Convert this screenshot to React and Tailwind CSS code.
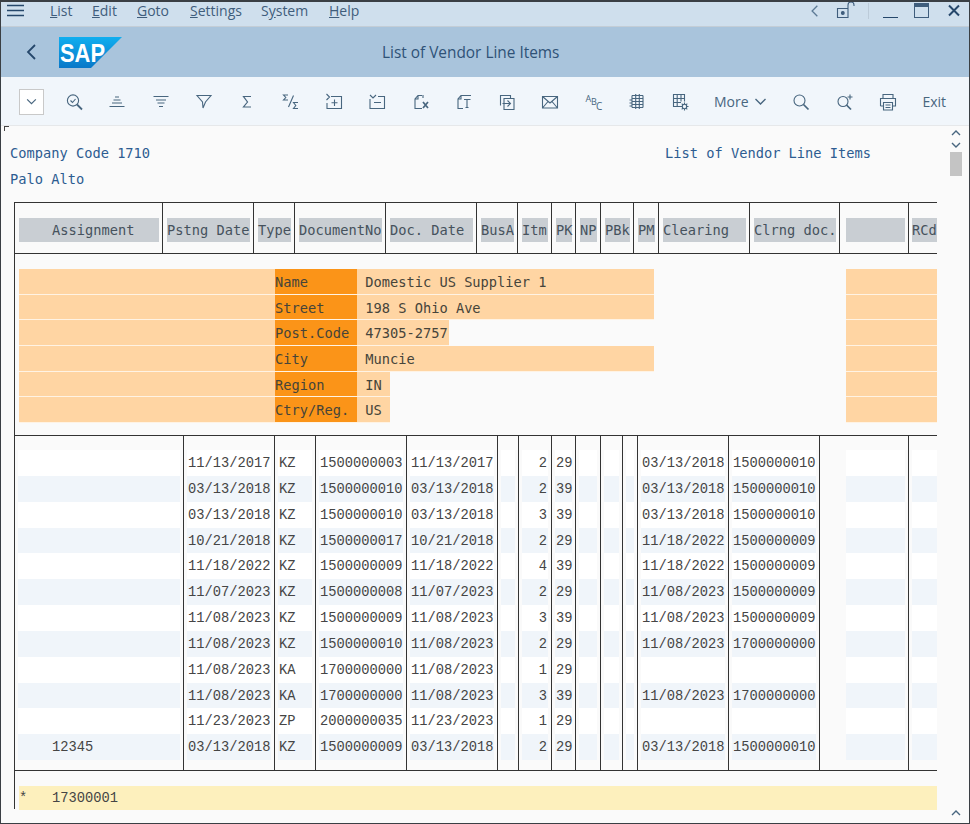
const mono = "font-['Liberation_Mono',monospace] text-[13.75px]";
const label = "font-['DejaVu_Sans_Mono',monospace] text-[13.7px]";
const ui = "font-['Open_Sans',sans-serif]";

const headerGrid = 'grid grid-cols-[148px_91px_41px_91px_91px_41px_34px_24px_25px_33px_25px_91px_90px_69px_29px]';
const dataGrid = 'grid grid-cols-[169px_91px_41px_91px_91px_21px_33px_24px_25px_22px_15px_91px_91px_89px_29px]';

const headers = [
  '    Assignment', 'Pstng Date', 'Type', 'DocumentNo', 'Doc. Date', 'BusA', 'Itm', 'PK', 'NP', 'PBk', 'PM',
  'Clearing', 'Clrng doc.', '', 'RCd',
];

const address = [
  { name: 'Name', value: ' Domestic US Supplier 1', width: 'w-[297px]' },
  { name: 'Street', value: ' 198 S Ohio Ave', width: 'w-[297px]' },
  { name: 'Post.Code', value: ' 47305-2757', width: 'w-[92px]' },
  { name: 'City', value: ' Muncie', width: 'w-[297px]' },
  { name: 'Region', value: ' IN', width: 'w-[33px]' },
  { name: 'Ctry/Reg.', value: ' US', width: 'w-[33px]' },
];

const rows = [
  ['', '11/13/2017', 'KZ', '1500000003', '11/13/2017', '2', '29', '03/13/2018', '1500000010'],
  ['', '03/13/2018', 'KZ', '1500000010', '03/13/2018', '2', '39', '03/13/2018', '1500000010'],
  ['', '03/13/2018', 'KZ', '1500000010', '03/13/2018', '3', '39', '03/13/2018', '1500000010'],
  ['', '10/21/2018', 'KZ', '1500000017', '10/21/2018', '2', '29', '11/18/2022', '1500000009'],
  ['', '11/18/2022', 'KZ', '1500000009', '11/18/2022', '4', '39', '11/18/2022', '1500000009'],
  ['', '11/07/2023', 'KZ', '1500000008', '11/07/2023', '2', '29', '11/08/2023', '1500000009'],
  ['', '11/08/2023', 'KZ', '1500000009', '11/08/2023', '3', '39', '11/08/2023', '1500000009'],
  ['', '11/08/2023', 'KZ', '1500000010', '11/08/2023', '2', '29', '11/08/2023', '1700000000'],
  ['', '11/08/2023', 'KA', '1700000000', '11/08/2023', '1', '29', '', ''],
  ['', '11/08/2023', 'KA', '1700000000', '11/08/2023', '3', '39', '11/08/2023', '1700000000'],
  ['', '11/23/2023', 'ZP', '2000000035', '11/23/2023', '1', '29', '', ''],
  ['    12345', '03/13/2018', 'KZ', '1500000009', '03/13/2018', '2', '29', '03/13/2018', '1500000010'],
];

function Icon({ children, w = 20, h = 20 }) {
  return (
    <svg width={w} height={h} viewBox={`0 0 ${w} ${h}`} fill="none" stroke="#48667f" strokeWidth="1.1" className="block">
      {children}
    </svg>
  );
}

const toolIcons = [
  // find with check
  <Icon key="find">
    <circle cx="9" cy="8.5" r="5.6" /><path d="M13 12.5l5 5" strokeWidth="1.8" /><path d="M6.5 8.5l2 2 3-3.5" />
  </Icon>,
  // sort ascending
  <Icon key="asc">
    <path d="M8 5h4M6.5 8h7M5 11h10M2.500 14.500h15" />
  </Icon>,
  // sort descending
  <Icon key="desc">
    <path d="M2.500 4.500h15M5 8h10M6.500 11h7M8 14.500h4" />
  </Icon>,
  // filter
  <Icon key="filter">
    <path d="M3 3.500h14l-5.500 6.500-2.500 6-.5-6z" />
  </Icon>,
  // sum
  <Icon key="sum">
    <path d="M14 4.500H6.500l4 5.500-4 5h7.500" strokeWidth="1.2" />
  </Icon>,
  // subtotal
  <Icon key="subtotal">
    <path d="M7 3H2.500l2.300 2.500-2.300 2.500H7M12.500 3.500L7.500 15M17 10.500h-4.500l2.300 3-2.300 3H17" />
  </Icon>,
  // expand
  <Icon key="expand">
    <path d="M2.500 2l3 3-3 3M7 4.500h10.500v12H3V11M10.500 7.500v6.500M7.500 10.700h6" />
  </Icon>,
  // collapse
  <Icon key="collapse">
    <path d="M3 3l3 3 3-3M11 4.500h6.500v12H3V7M7 10.500h7" />
  </Icon>,
  // doc x
  <Icon key="docx">
    <path d="M11 3.500H7L4 7v9.500h7M7 3.500V7H4M12 3v3" />
    <path d="M12 10l5 6M17 10l-5 6" strokeWidth="1.7" />
  </Icon>,
  // doc T
  <Icon key="doct">
    <path d="M17 3.500H7L4 7v9.500h5M7 3.500V7H4" />
    <path d="M10 7.500h6.500M13 7.500v8M11.500 15.500h3" />
  </Icon>,
  // doc export
  <Icon key="export">
    <path d="M3.500 13.500V3.500h10V6M7 6.500h10v11H7z" />
    <path d="M5.500 11.500h7.500M10.500 8.500l3 3-3 3" />
  </Icon>,
  // mail
  <Icon key="mail">
    <path d="M2.500 4.500h15v11.500h-15zM2.500 4.500L10 11l7.500-6.500M2.500 16L8 9.500M17.500 16L12 9.500" />
  </Icon>,
  // spelling
  <svg key="abc" width="20" height="20" viewBox="0 0 20 20" className="block overflow-visible">
    <text x="1.500" y="10" fontSize="9" fill="#48667f" fontFamily="Open Sans">A</text>
    <text x="7" y="13" fontSize="9" fill="#48667f" fontFamily="Open Sans">B</text>
    <text x="12" y="18" fontSize="10" fill="#48667f" fontFamily="Open Sans">C</text>
  </svg>,
  // table
  <Icon key="table">
    <path d="M5 3.500h11M5 6.500h11M5 9.500h11M5 12.500h11M5 15.500h11M5 3.500v12M8.700 2v15M12.300 2v15M16 3.500v12M2.500 8h2M2.500 11h2M2.500 14h2" />
  </Icon>,
  // table settings
  <Icon key="tableconf">
    <path d="M11 14.500H3.500V2.500h11v7M3.500 6.500h11M3.500 10.500h7.500M7.200 2.500v12M11 2.500v7" />
    <circle cx="14.500" cy="14.500" r="2.200" /><path d="M14.500 10.500v1.800M14.500 16.700v1.800M10.500 14.500h1.800M16.700 14.500h1.800M11.700 11.700l1.200 1.200M16.100 16.100l1.200 1.200M17.300 11.700l-1.200 1.200M12.900 16.100l-1.200 1.200" />
  </Icon>,
];

function Chevron({ className = '', dir = 'down', size = 12, color = '#48667f', width = 1.1 }) {
  const d = { down: 'M2 4l4 4 4-4', up: 'M2 8l4-4 4 4', left: 'M8 1.500L3.500 6 8 10.500' }[dir];
  return (
    <svg width={size} height={size} viewBox="0 0 12 12" fill="none" stroke={color} strokeWidth={width} className={className}>
      <path d={d} />
    </svg>
  );
}

function MenuBar() {
  const items = [
    ['', 'L', 'ist', 'w-[42px]'],
    ['', 'E', 'dit', 'w-[45px]'],
    ['', 'G', 'oto', 'w-[53px]'],
    ['', 'S', 'ettings', 'w-[71px]'],
    ['S', 'y', 'stem', 'w-[68px]'],
    ['', 'H', 'elp', 'w-[40px]'],
  ];
  return (
    <div className="flex h-[25px] items-center border-b border-[#c3cdd6] bg-[#cfdfed] pb-[7px]">
      <svg width="18" height="13" viewBox="0 0 18 13" stroke="#25476b" strokeWidth="1.5" className="ml-[6px]">
        <path d="M0 1.500h17M0 6.500h17M0 11.500h17" />
      </svg>
      <nav className={`ml-[25px] flex text-[14px] text-[#3f5d7c] ${ui}`}>
        {items.map(([pre, key, rest, w]) => (
          <span key={key + rest} className={w}>{pre}<u>{key}</u>{rest}</span>
        ))}
      </nav>
      <div className="ml-auto flex items-center pr-[8px]">
        <Chevron dir="left" size={14} color="#5c7a96" />
        <svg width="20" height="19" viewBox="0 0 20 19" fill="none" stroke="#3f5d7c" strokeWidth="1.1" className="ml-[14px]">
          <path d="M1.500 7.500h10.500v9H1.500z" /><circle cx="6.800" cy="12" r="1.400" fill="#3f5d7c" />
          <path d="M12 7V4a3 3 0 0 1 6 0v1" />
        </svg>
        <div className="ml-[12px] h-[16px] w-px bg-[#bccbd9]" />
        <div className="ml-[14px] mt-[14px] h-[1.5px] w-[15px] bg-[#25476b]" />
        <div className="ml-[16px] h-[15px] w-[15px] border border-[#3f5d7c] border-t-[4px]" />
        <svg width="14" height="13" viewBox="0 0 14 13" stroke="#25476b" strokeWidth="2" className="ml-[18px]">
          <path d="M2 1.500l10 10M12 1.500l-10 10" />
        </svg>
      </div>
    </div>
  );
}

function TitleBar() {
  return (
    <div className="relative flex h-[50px] items-center bg-[#a9c4dc]">
      <svg width="12" height="18" viewBox="0 0 12 18" fill="none" stroke="#25476b" strokeWidth="1.8" className="ml-[24px]">
        <path d="M10 2L3 9l7 7" />
      </svg>
      <svg width="64" height="31" viewBox="0 0 64 31" className="ml-[22px]">
        <defs>
          <linearGradient id="sapblue" x1="0" y1="0" x2="0" y2="1">
            <stop offset="0" stopColor="#10aeef" />
            <stop offset="1" stopColor="#0a78c8" />
          </linearGradient>
        </defs>
        <path d="M0 0h63L32 31H0z" fill="url(#sapblue)" />
        <text x="1" y="25" fill="#fff" fontSize="25" fontWeight="700" fontFamily="Liberation Sans" textLength="45" lengthAdjust="spacingAndGlyphs">SAP</text>
      </svg>
      <h1 className={`absolute left-[381px] mt-[2px] text-[15.400px] text-[#2f5277] ${ui}`}>List of Vendor Line Items</h1>
    </div>
  );
}

function Toolbar() {
  const Slot = ({ children }) => <div className="flex w-[43.300px] justify-center">{children}</div>;
  return (
    <div className="flex h-[49px] items-center border-b border-[#e6e8ea] bg-[#f1f6fb] pt-px">
      <div className="ml-[18px] flex h-[26px] w-[25px] items-center justify-center border border-[#c9c9c9] bg-white">
        <Chevron size={13} />
      </div>
      <div className="ml-[8.500px] flex">
        {toolIcons.map((icon, i) => <Slot key={i}>{icon}</Slot>)}
      </div>
      <div className={`ml-[12px] flex items-center text-[14px] text-[#48667f] ${ui}`}>
        More<Chevron size={15} className="ml-[4px]" />
      </div>
      <div className="ml-[12px] flex">
        <Slot>
          <Icon><circle cx="8.500" cy="8.500" r="5.500" /><path d="M12.500 12.500l5 5" strokeWidth="1.700" /></Icon>
        </Slot>
        <Slot>
          <Icon><circle cx="8" cy="9.500" r="5" /><path d="M11.500 13l4.500 4.500" strokeWidth="1.700" /><path d="M15 2.500v5M12.500 5h5" /></Icon>
        </Slot>
        <Slot>
          <Icon>
            <path d="M5 6.500V2.500h10v4M2.500 14V6.500h15V14h-3M5.500 14h-3M5.500 10.500h9V18h-9zM7.500 13h5M7.500 15.500h5" />
          </Icon>
        </Slot>
      </div>
      <span className={`ml-[13px] text-[14px] text-[#48667f] ${ui}`}>Exit</span>
    </div>
  );
}

function HeaderRow() {
  return (
    <div className={`${headerGrid} h-[52px] border-y border-[#333] ${label} text-[#46525d]`}>
      {headers.map((text, i) => {
        const pad = i === 13 ? 'pl-[6px] pr-[3px]' : i === 14 ? 'pl-[3px]' : 'pl-[4px] pr-[3px]';
        return (
          <div key={i} className={`flex items-center border-l border-[#333] pt-[4px] ${pad}`}>
            <span className="block h-[24px] w-full whitespace-pre bg-[#c9ced3] leading-[24px]">{text}</span>
          </div>
        );
      })}
    </div>
  );
}

function AddressBlock() {
  const band = 'border-b border-[#fff3e4] bg-[#ffd5a3] pt-px leading-[24px]';
  return (
    <div className={`h-[181px] border-l border-[#333] pl-[4px] pt-[15px] ${label} text-[#46443a]`}>
      {address.map((row) => (
        <div key={row.name} className="flex h-[25.670px]">
          <div className={`w-[256px] ${band}`} />
          <div className="w-[82px] whitespace-pre border-b border-[#fff3e4] bg-[#fb9418] pt-px leading-[24px]">{row.name}</div>
          <div className={`${row.width} whitespace-pre ${band}`}>{row.value}</div>
          <div className={`ml-auto w-[91px] ${band}`} />
        </div>
      ))}
    </div>
  );
}

function DataCell({ shaded, className = '', wrap = 'pl-[3px] pr-[3px]', children }) {
  return (
    <div className={`flex border-l border-[#333] ${wrap}`}>
      <span className={`block h-[25.850px] w-full whitespace-pre px-px pt-[2px] leading-[23.850px] ${shaded ? 'bg-[#f0f5fa]' : 'bg-white'} ${className}`}>{children}</span>
    </div>
  );
}

function DataRow({ cells, shaded }) {
  const [assignment, pstng, type, doc, docDate, itm, pk, clearing, clrng] = cells;
  return (
    <div className={`${dataGrid} h-[25.850px] ${mono} text-[#454545]`}>
      <DataCell shaded={shaded}>{assignment}</DataCell>
      <DataCell shaded={shaded}>{pstng}</DataCell>
      <DataCell shaded={shaded}>{type}</DataCell>
      <DataCell shaded={shaded}>{doc}</DataCell>
      <DataCell shaded={shaded}>{docDate}</DataCell>
      <DataCell shaded={shaded} />
      <DataCell shaded={shaded} className="text-right">{itm}</DataCell>
      <DataCell shaded={shaded}>{pk}</DataCell>
      <DataCell shaded={shaded} />
      <DataCell shaded={shaded} />
      <DataCell shaded={shaded} />
      <DataCell shaded={shaded}>{clearing}</DataCell>
      <DataCell shaded={shaded}>{clrng}</DataCell>
      <DataCell shaded={shaded} wrap="pl-[26px] pr-[3px]" />
      <DataCell shaded={shaded} wrap="pl-[3px]" />
    </div>
  );
}

function SpacerRow({ height }) {
  return (
    <div className={`${dataGrid} ${height}`}>
      {Array.from({ length: 15 }).map((_, i) => <div key={i} className="border-l border-[#333]" />)}
    </div>
  );
}

function Scrollbar() {
  return (
    <div className="flex w-[16px] flex-col items-center pt-px pb-[4px]">
      <Chevron dir="up" size={12} color="#48667f" width={1.4} />
      <Chevron dir="down" size={12} color="#48667f" width={1.4} />
      <div className="mt-px h-[24px] w-[12px] bg-[#c4c4c4]" />
      <Chevron dir="up" size={12} color="#48667f" width={1.4} className="mt-auto" />
    </div>
  );
}

export default function App() {
  return (
    <div className="flex h-[824px] w-[970px] flex-col overflow-hidden border-x border-t-2 border-b border-[#3a3f44] bg-[#fafafa]">
      <MenuBar />
      <TitleBar />
      <Toolbar />
      <div className="relative flex flex-1">
        <div className="absolute left-[3px] top-0 h-[5px] w-[5px] border-l border-t border-[#444]" />
        <main className="w-[947px] pt-[15px]">
          <div className={`flex h-[25.750px] whitespace-pre pl-[9px] leading-[25.750px] text-[#2d5c91] ${label}`}>
            <span className="w-[655px]">Company Code 1710</span>
            <span>List of Vendor Line Items</span>
          </div>
          <div className={`h-[25.750px] pl-[9px] leading-[25.750px] text-[#2d5c91] ${label}`}>Palo Alto</div>
          <div className="ml-[13px] mt-[9.500px] w-[923px]">
            <HeaderRow />
            <AddressBlock />
            <div className="border-t border-[#333]">
              <SpacerRow height="h-[14px]" />
              {rows.map((cells, i) => <DataRow key={i} cells={cells} shaded={i % 2 === 1} />)}
              <SpacerRow height="h-[10px]" />
            </div>
            <div className={`h-[39px] border-t border-l border-[#333] pl-[4px] pt-[15px] ${mono} text-[#454545]`}>
              <div className="h-[24px] whitespace-pre bg-[#fdf0bd] pt-px leading-[23px]">*   17300001</div>
            </div>
          </div>
        </main>
        <Scrollbar />
      </div>
    </div>
  );
}
